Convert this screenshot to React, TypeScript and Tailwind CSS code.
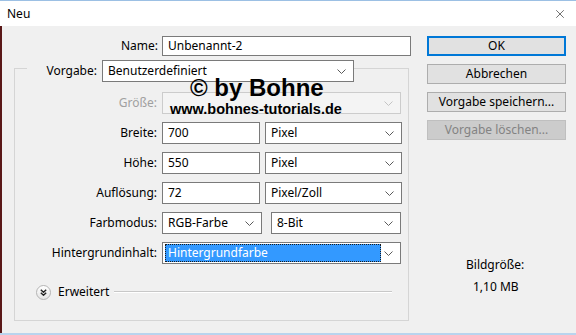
import { X } from "lucide-react";

const Chevron = ({ disabled }: { disabled?: boolean }) => (
  <svg width="9" height="5" viewBox="0 0 9 5" className="shrink-0">
    <path d="M0.5 0.5 L4.5 4.5 L8.5 0.5" fill="none" stroke={disabled ? "#c4c4c4" : "#5a5a5a"} strokeWidth="1" />
  </svg>
);

const Input = ({ value, className }: { value: string; className?: string }) => (
  <div className={`h-[22px] bg-white border border-[#7a7a7a] flex items-center pl-[5px] text-black ${className ?? ""}`}>
    {value}
  </div>
);

const Select = ({ value, className, disabled }: { value?: string; className?: string; disabled?: boolean }) => (
  <div
    className={`h-[22px] border flex items-center justify-between pl-[5px] pr-[7px] ${
      disabled ? "bg-[#f4f4f4] border-[#cccccc]" : "bg-white border-[#7a7a7a] text-black"
    } ${className ?? ""}`}
  >
    <span>{value}</span>
    <Chevron disabled={disabled} />
  </div>
);

const Row = ({ label, children, disabled }: { label: string; children: React.ReactNode; disabled?: boolean }) => (
  <div className="flex items-center h-[22px]">
    <div className={`w-[143px] text-right pr-[1px] ${disabled ? "text-[#a0a0a0]" : "text-black"}`}>{label}</div>
    <div className="ml-[4px] flex gap-[5px]">{children}</div>
  </div>
);

const Button = ({ label, primary, disabled }: { label: string; primary?: boolean; disabled?: boolean }) => (
  <div
    className={`h-[20px] w-[139px] flex items-center justify-center ${
      primary
        ? "border-2 border-[#0078d7] bg-[#e1e1e1] text-black"
        : disabled
        ? "border border-[#bfbfbf] bg-[#cccccc] text-[#838383]"
        : "border border-[#adadad] bg-[#e1e1e1] text-black"
    }`}
  >
    {label}
  </div>
);

export default function App() {
  return (
    <div
      className="w-[576px] h-[335px] relative bg-[#f0f0f0] overflow-hidden text-[12px] leading-none"
      style={{ fontFamily: '"Noto Sans", "Liberation Sans", sans-serif' }}
    >
      {/* Title bar */}
      <div className="h-[26px] bg-white border-t border-[#9cc0e4] flex items-center justify-between pl-[7px] pr-[9px]">
        <span className="text-black">Neu</span>
        <X className="w-[14px] h-[14px] text-[#333]" strokeWidth={1.2} />
      </div>

      <div className="flex h-[307px] border-l-2 border-[#5a1818]">
        {/* Form column */}
        <div className="w-[423px] pt-[10px]">
          <div className="flex items-center h-[20px]">
            <div className="w-[156px] text-right text-black">Name:</div>
            <Input value="Unbenannt-2" className="ml-[4px] w-[249px] !h-[20px]" />
          </div>

          <div className="ml-[12px] mt-[12px] w-[395px] h-[253px] border border-[#d5d5d5]">
            <div className="flex items-center h-[22px] -mt-[9px]">
              <div className="ml-[12px] w-[75px] bg-[#f0f0f0] h-full flex items-center justify-end pr-[5px] text-black">
                Vorgabe:
              </div>
              <Select value="Benutzerdefiniert" className="w-[252px]" />
            </div>

            <div className="mt-[10px] flex flex-col gap-[8px]">
              <Row label="Größe:" disabled>
                <Select className="w-[239px]" disabled />
              </Row>
              <Row label="Breite:">
                <Input value="700" className="w-[98px]" />
                <Select value="Pixel" className="w-[137px]" />
              </Row>
              <Row label="Höhe:">
                <Input value="550" className="w-[98px]" />
                <Select value="Pixel" className="w-[137px]" />
              </Row>
              <Row label="Auflösung:">
                <Input value="72" className="w-[98px]" />
                <Select value="Pixel/Zoll" className="w-[137px]" />
              </Row>
              <Row label="Farbmodus:">
                <Select value="RGB-Farbe" className="w-[100px]" />
                <Select value="8-Bit" className="w-[130px] ml-[4px]" />
              </Row>
              <Row label="Hintergrundinhalt:">
                <div className="h-[22px] w-[239px] bg-white border border-[#7a7a7a] flex items-center justify-between pl-[2px] pr-[7px]">
                  <div className="h-[18px] w-[216px] bg-[#3399ff] border border-dotted border-[#1a1a1a] text-white flex items-center pl-[2px]">
                    Hintergrundfarbe
                  </div>
                  <Chevron />
                </div>
              </Row>
            </div>

            <div className="mt-[20px] flex items-center h-[16px] pl-[21px]">
              <div className="w-[15px] h-[15px] rounded-full border border-[#b4b4b4] bg-gradient-to-b from-white to-[#e4e4e4] flex items-center justify-center">
                <svg width="7" height="7" viewBox="0 0 7 7">
                  <path d="M0.8 0.8 L3.5 3.3 L6.2 0.8 M0.8 3.7 L3.5 6.2 L6.2 3.7" fill="none" stroke="#222" strokeWidth="1.4" />
                </svg>
              </div>
              <span className="ml-[7px] text-black">Erweitert</span>
              <div className="ml-[5px] w-[278px] h-[2px] border-t border-[#c8c8c8] border-b border-b-white" />
            </div>
          </div>
        </div>

        {/* Button column */}
        <div className="pt-[10px] pl-[2px] flex flex-col">
          <div className="flex flex-col gap-[8px]">
            <Button label="OK" primary />
            <Button label="Abbrechen" />
            <Button label="Vorgabe speichern..." />
            <Button label="Vorgabe löschen..." disabled />
          </div>
          <div className="mt-[118px] pl-[39px] text-black h-[14px] flex items-center">Bildgröße:</div>
          <div className="mt-[8px] pl-[46px] text-black h-[14px] flex items-center">1,10 MB</div>
        </div>
      </div>

      <div className="h-[2px] bg-[#b9d4ee]" />

      {/* Watermark overlay */}
      <div
        className="absolute left-[190px] top-[76px] font-bold text-black text-[24px] leading-none"
        style={{ fontFamily: '"Liberation Sans", Arial, sans-serif' }}
      >
        ©&nbsp;by Bohne
      </div>
      <div
        className="absolute left-[170px] top-[102px] font-bold text-black text-[14.5px] leading-none"
        style={{ fontFamily: '"Liberation Sans", Arial, sans-serif' }}
      >
        www.bohnes-tutorials.de
      </div>
    </div>
  );
}
